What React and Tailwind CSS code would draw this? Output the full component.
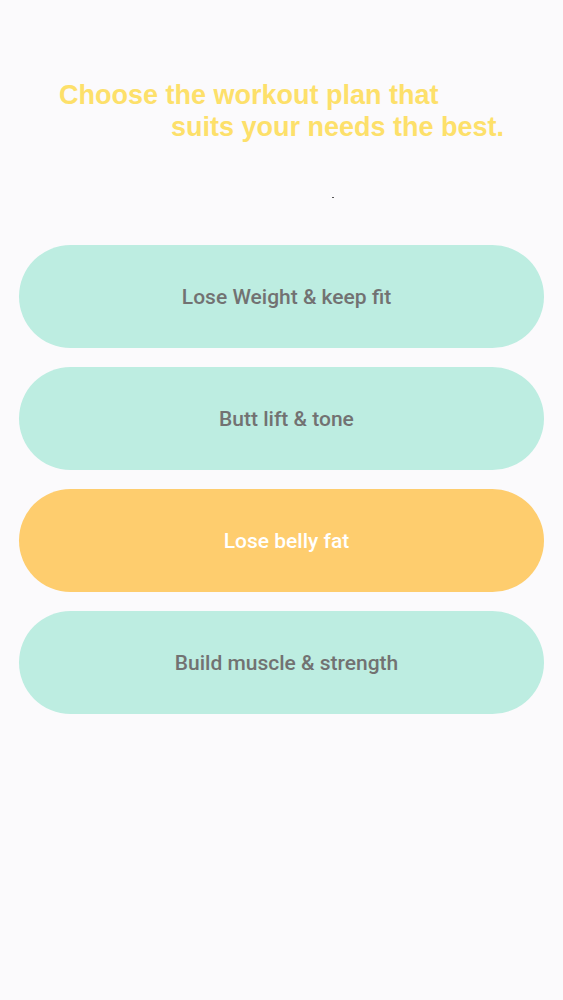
export default function App() {
  const items = [
    { label: "Lose Weight & keep fit", active: false },
    { label: "Butt lift & tone", active: false },
    { label: "Lose belly fat", active: true },
    { label: "Build muscle & strength", active: false },
  ];
  return (
    <div className="min-h-[1000px] w-full bg-[#fbfafc]" style={{ fontFamily: "Roboto, sans-serif" }}>
      <div className="pt-[79px] text-[27px] font-bold leading-[32px] text-[#fde06a]" style={{ fontFamily: '"Liberation Sans", Arial, sans-serif' }}>
        <div className="pl-[59px]">Choose the workout plan that</div>
        <div className="pl-[171px]">suits your needs the best.</div>
      </div>
      <div className="pl-[332px] pt-[54px]">
        <div className="h-[1px] w-[2px] bg-[#555]" />
      </div>
      <div className="flex flex-col gap-[19px] px-[19px] pt-[47px]">
        {items.map((it) => (
          <div
            key={it.label}
            className={`flex h-[103px] items-center justify-center rounded-full pl-[10px] pt-[2px] text-[21px] font-medium ${
              it.active ? "bg-[#fecd6e] text-white" : "bg-[#bdede1] text-[#727272]"
            }`}
          >
            {it.label}
          </div>
        ))}
      </div>
    </div>
  );
}
